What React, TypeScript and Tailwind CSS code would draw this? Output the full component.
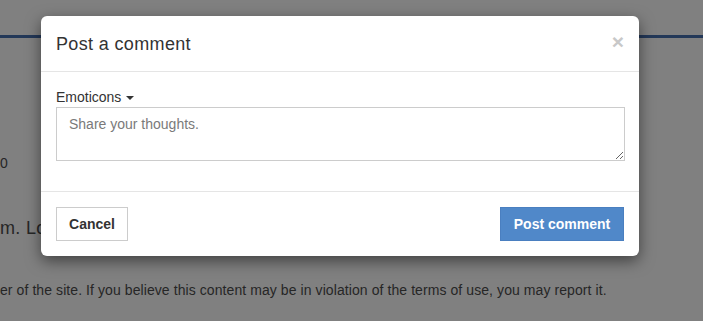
import React from "react";

export default function App() {
  return (
    <div
      className="relative w-[703px] h-[321px] overflow-hidden bg-[#808080] text-[#262626]"
      style={{ fontFamily: '"Liberation Sans", Arial, sans-serif' }}
    >
      {/* background page (under overlay) */}
      <div className="flex flex-col">
        <div className="h-[35px]" />
        <div className="h-[3px] bg-[#233858]" />
        <div className="h-[115px]" />
        <div className="text-[14px] leading-[20px]">0</div>
        <div className="h-[43px]" />
        <div className="text-[18px] leading-[24px] tracking-[0.3px] whitespace-nowrap">m. Loc</div>
        <div className="h-[40px]" />
        <div className="text-[14px] leading-[20px] tracking-[0.08px] whitespace-nowrap">
          er of the site. If you believe this content may be in violation of the terms of use, you may report it.
        </div>
      </div>

      {/* modal */}
      <div className="absolute left-[41px] top-[16px] w-[598px] bg-white rounded-[6px] shadow-[0_5px_15px_rgba(0,0,0,0.5)] flex flex-col">
        <div className="flex items-center justify-between px-[15px] pt-[15px] pb-[14px] border-b border-[#e5e5e5]">
          <h4 className="text-[18px] leading-[26px] tracking-[0.35px] text-[#333] font-normal">Post a comment</h4>
          <button className="text-[21px] leading-[21px] font-bold text-[#c8c8c8] -mt-[6px]">×</button>
        </div>
        <div className="px-[15px] pt-[15px] pb-[15px] flex flex-col">
          <div className="flex items-center gap-[5px] text-[14px] leading-[20px] text-[#333]">
            <span>Emoticons</span>
            <span className="w-0 h-0 border-l-[4px] border-r-[4px] border-t-[4px] border-l-transparent border-r-transparent border-t-[#333] mt-[1px]" />
          </div>
          <textarea
            className="mb-[15px] w-[569px] h-[54px] border border-[#cccccc] px-[12px] py-[6px] text-[14px] leading-[20px] text-[#555] placeholder:text-[#7a7a7a] outline-none"
            style={{ fontFamily: '"Liberation Sans", Arial, sans-serif' }}
            placeholder="Share your thoughts."
          />
        </div>
        <div className="flex items-center justify-between border-t border-[#e5e5e5] p-[15px]">
          <button className="h-[34px] w-[72px] border border-[#cccccc] bg-white text-[14px] font-bold text-[#333]">
            Cancel
          </button>
          <button className="h-[34px] w-[124px] border border-[#4a7fc0] bg-[#5088c9] text-[14px] font-bold text-white">
            Post comment
          </button>
        </div>
      </div>
    </div>
  );
}
